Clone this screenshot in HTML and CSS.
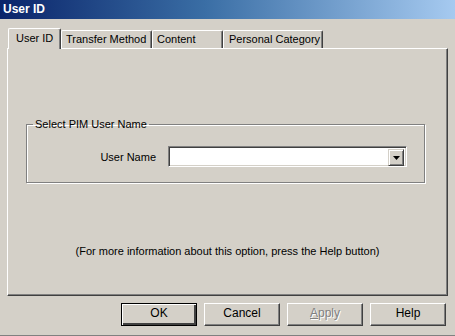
FILE: index.html
```html
<!DOCTYPE html>
<html>
<head>
<meta charset="utf-8">
<link rel="stylesheet" href="styles.css">
</head>
<body>
<div class="dialog">
  <div class="titlebar">User ID</div>
  <div class="content">
    <div class="tabs">
      <div class="tab active w-user">User ID</div>
      <div class="tab w-transfer">Transfer Method</div>
      <div class="tab w-content">Content</div>
      <div class="tab w-personal">Personal Category</div>
    </div>
    <div class="panel">
      <fieldset class="group">
        <legend>Select PIM User Name</legend>
        <div class="row">
          <label class="row-label">User Name</label>
          <div class="combo">
            <div class="combo-field"></div>
            <div class="combo-btn">
              <svg width="7" height="4" viewBox="0 0 7 4"><polygon points="0,0 7,0 3.5,4" fill="#000"/></svg>
            </div>
          </div>
        </div>
      </fieldset>
      <p class="info">(For more information about this option, press the Help button)</p>
    </div>
    <div class="buttons">
      <div class="btn default">OK</div>
      <div class="btn">Cancel</div>
      <div class="btn disabled"><span><u>A</u>pply</span></div>
      <div class="btn">Help</div>
    </div>
  </div>
</div>
</body>
</html>
```

FILE: styles.css
```css
html, body {
  margin: 0;
  padding: 0;
}
body {
  width: 455px;
  height: 336px;
  overflow: hidden;
  background: #d4d0c8;
  font-family: "Liberation Sans", Arial, sans-serif;
  font-size: 11px;
  color: #000;
}
.dialog {
  display: flex;
  flex-direction: column;
  height: 336px;
  box-sizing: border-box;
  border-bottom: 1px solid #808080;
}
.titlebar {
  height: 19px;
  line-height: 19px;
  padding-left: 3px;
  background: linear-gradient(to right, #0a246a 0%, #3a6ea5 45%, #a6caf0 100%);
  color: #fff;
  font-weight: bold;
  font-size: 12px;
}
.content {
  padding: 9px 7px 0 7px;
  display: flex;
  flex-direction: column;
}
.tabs {
  display: flex;
  align-items: flex-end;
  height: 20px;
  padding-left: 1px;
}
.tab {
  box-sizing: border-box;
  height: 18px;
  line-height: 13px;
  padding: 2px 0 0 4px;
  border-top: 1px solid #fff;
  border-left: 1px solid #fff;
  border-right: 1px solid #404040;
  box-shadow: inset -1px 0 0 #808080;
  border-radius: 2px 2px 0 0;
  white-space: nowrap;
}
.tab.active {
  height: 21px;
  margin-bottom: -1px;
  padding: 3px 0 0 7px;
  position: relative;
  z-index: 1;
  background: #d4d0c8;
}
.w-user { width: 53px; }
.w-transfer { width: 91px; }
.w-content { width: 71px; }
.w-personal { width: 100px; padding-left: 5px; }
.panel {
  box-sizing: border-box;
  height: 248px;
  border-top: 1px solid #fff;
  border-left: 1px solid #fff;
  border-right: 1px solid #404040;
  border-bottom: 1px solid #404040;
  box-shadow: inset -1px -1px 0 #808080;
  padding-top: 69px;
  display: flex;
  flex-direction: column;
}
.group {
  margin: 0 22px 0 18px;
  padding: 15px 0 15px 0;
  border: 1px solid #808080;
  box-shadow: inset 1px 1px 0 #fff, 1px 1px 0 #fff;
  min-width: 0;
}
.group legend {
  margin-left: 6px;
  padding: 0 2px;
  line-height: 13px;
}
.row {
  display: flex;
  align-items: center;
}
.row-label {
  width: 129px;
  text-align: right;
  margin-right: 12px;
}
.combo {
  box-sizing: border-box;
  width: 239px;
  height: 21px;
  background: #fff;
  border-top: 1px solid #808080;
  border-left: 1px solid #808080;
  border-right: 1px solid #fff;
  border-bottom: 1px solid #fff;
  box-shadow: inset 1px 1px 0 #404040, inset -1px -1px 0 #d4d0c8;
  display: flex;
  padding: 2px;
}
.combo-field {
  flex: 1;
}
.combo-btn {
  box-sizing: border-box;
  width: 16px;
  height: 17px;
  background: #d4d0c8;
  border-top: 1px solid #d4d0c8;
  border-left: 1px solid #d4d0c8;
  border-right: 1px solid #404040;
  border-bottom: 1px solid #404040;
  box-shadow: inset 1px 1px 0 #fff, inset -1px -1px 0 #808080;
  display: flex;
  align-items: center;
  justify-content: center;
}
.combo-btn svg {
  display: block;
  margin-top: 1px;
}
.info {
  margin: 62px 0 0 0;
  text-align: center;
  line-height: 13px;
}
.buttons {
  display: flex;
  justify-content: flex-end;
  gap: 7px;
  margin-top: 7px;
  padding-right: 2px;
}
.btn {
  box-sizing: border-box;
  width: 76px;
  height: 23px;
  line-height: 19px;
  text-align: center;
  border-top: 1px solid #fff;
  border-left: 1px solid #fff;
  border-right: 1px solid #404040;
  border-bottom: 1px solid #404040;
  box-shadow: inset -1px -1px 0 #808080;
  font-size: 12px;
}
.btn.default {
  border: 1px solid #000;
  box-shadow: inset 1px 1px 0 #fff, inset -2px -2px 0 #404040, inset -1px -1px 0 #808080;
}
.btn.disabled {
  color: #808080;
  text-shadow: 1px 1px 0 #fff;
}
```
